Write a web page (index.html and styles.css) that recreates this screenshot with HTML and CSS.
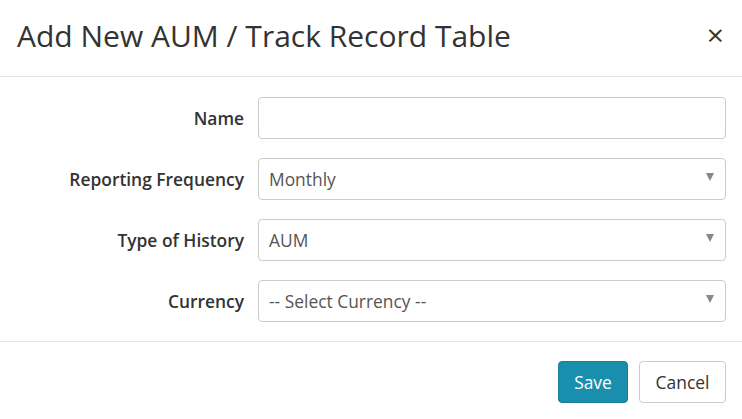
FILE: index.html
```html
<!DOCTYPE html>
<html>
<head>
<meta charset="utf-8">
<link rel="stylesheet" href="styles.css">
</head>
<body>
<div class="modal">
  <div class="modal-header">
    <h4 class="modal-title">Add New AUM / Track Record Table</h4>
    <span class="close">&times;</span>
  </div>
  <div class="modal-body">
    <div class="form-row">
      <label class="form-label">Name</label>
      <div class="form-control"></div>
    </div>
    <div class="form-row">
      <label class="form-label">Reporting Frequency</label>
      <div class="form-control select"><span>Monthly</span><span class="caret"></span></div>
    </div>
    <div class="form-row">
      <label class="form-label">Type of History</label>
      <div class="form-control select"><span>AUM</span><span class="caret"></span></div>
    </div>
    <div class="form-row">
      <label class="form-label">Currency</label>
      <div class="form-control select"><span>-- Select Currency --</span><span class="caret"></span></div>
    </div>
  </div>
  <div class="modal-footer">
    <button class="btn btn-primary">Save</button>
    <button class="btn btn-default">Cancel</button>
  </div>
</div>
</body>
</html>
```
FILE: styles.css
```css
* { box-sizing: border-box; }
html, body { margin: 0; padding: 0; background: #fff; }
body { font-family: "Open Sans", "Noto Sans", sans-serif; color: #333; width: 742px; height: 419px; overflow: hidden; }
.modal { width: 742px; }
.modal-header {
  height: 77px;
  border-bottom: 1px solid #e5e5e5;
  display: flex;
  align-items: center;
  justify-content: space-between;
  padding: 0 17px 0 17px;
}
.modal-title { margin: 0; font-size: 30px; font-weight: 400; color: #333; line-height: 1; position: relative; top: -2px; }
.close { font-size: 30px; font-weight: 400; color: #333; line-height: 1; position: relative; top: -3px; right: 1px; }
.modal-body { padding: 20px 16px 19px 0; display: flex; flex-direction: column; gap: 19px; }
.form-row { display: flex; align-items: center; }
.form-label { width: 258px; padding-right: 14px; text-align: right; font-size: 17.4px; font-weight: 600; color: #333; }
.form-control {
  flex: 1;
  height: 42px;
  border: 1px solid #ccc;
  border-radius: 4px;
  display: flex;
  align-items: center;
  justify-content: space-between;
  padding: 0 11px 0 10px;
  font-size: 17.4px;
  color: #555;
}
.caret { width: 0; height: 0; border-left: 4px solid transparent; border-right: 4px solid transparent; border-top: 8px solid #888; margin-top: -4px; }
.modal-footer {
  border-top: 1px solid #e5e5e5;
  padding: 19px 16px 0 0;
  display: flex;
  justify-content: flex-end;
  gap: 11px;
}
.btn { font-family: inherit; font-size: 17.4px; height: 42px; border-radius: 4px; padding: 0; }
.btn-primary { background: #1a8fad; border: 1px solid #177f99; color: #fff; width: 70px; }
.btn-default { background: #fff; border: 1px solid #ccc; color: #333; width: 87px; }
```
